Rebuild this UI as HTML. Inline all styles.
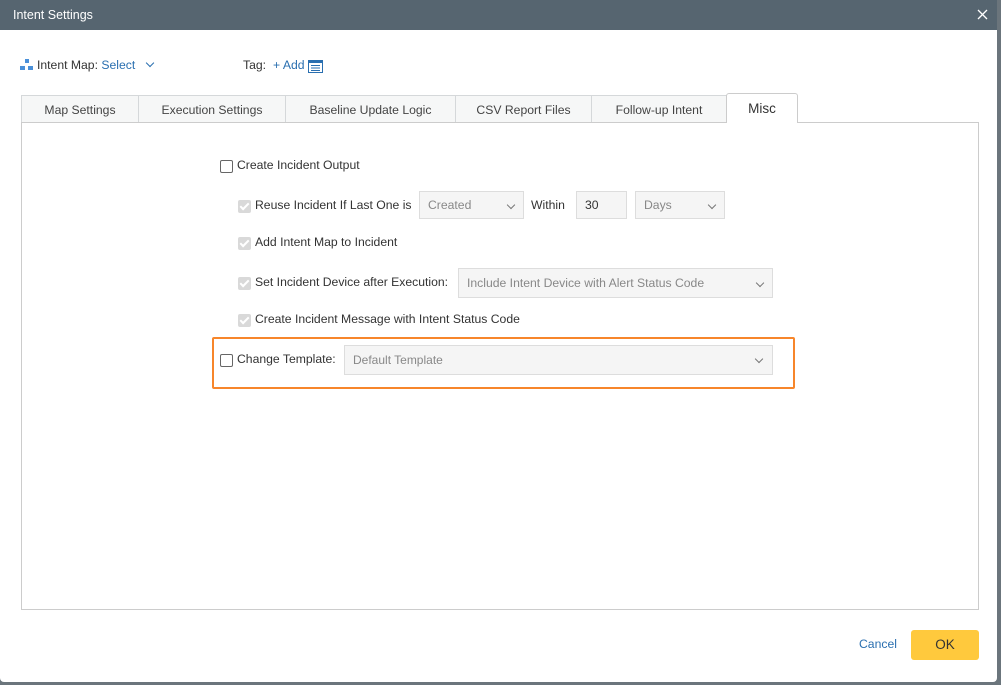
<!DOCTYPE html>
<html><head><meta charset="utf-8"><style>
body{margin:0;width:1001px;height:685px;background:#6b757c;position:relative;overflow:hidden;font-family:"Liberation Sans",sans-serif;font-size:12.2px;color:#333}
.a{position:absolute;white-space:nowrap}
#dlg{position:absolute;left:0;top:0;width:997px;height:682px;background:#fff;border-radius:0 0 4px 4px}
#hd{position:absolute;left:0;top:0;width:997px;height:30px;background:#566570;color:#fff}
.tab{position:absolute;top:95px;height:27px;background:#f6f7f7;border:1px solid #d5d8da;border-bottom:none;box-sizing:border-box;text-align:center;line-height:29px;color:#444}
.cb{position:absolute;width:11px;height:11px;border:1px solid #666;border-radius:2px;background:#fff}
.cd{position:absolute;width:13px;height:13px;border-radius:2px;background:#d9d9d9}
.cd:after{content:"";position:absolute;left:4px;top:1px;width:3px;height:7px;border:solid #fff;border-width:0 2px 2px 0;transform:rotate(45deg)}
.sel{position:absolute;height:28px;border:1px solid #ddd;background:#f5f5f5;box-sizing:border-box;color:#888;line-height:26px;padding-left:8px}
.chev{position:absolute;width:5px;height:5px;border:solid #777;border-width:0 1px 1px 0;transform:rotate(45deg)}
</style></head><body>
<div id="dlg">
<div id="hd"><span class="a" style="left:13px;top:8px;font-size:12.5px">Intent Settings</span>
<svg class="a" style="left:977px;top:9px" width="11" height="11"><path d="M1 1L10 10M10 1L1 10" stroke="#fff" stroke-width="1.3"/></svg></div>

<svg class="a" style="left:20px;top:59px" width="14" height="12"><rect x="5" y="0" width="4" height="4" fill="#4a90d9"/><rect x="0" y="7" width="5" height="4" fill="#4a90d9"/><rect x="8" y="7" width="5" height="4" fill="#4a90d9"/></svg>
<span class="a" style="left:37px;top:58px">Intent Map: <span style="color:#2a6fb0">Select</span></span>
<div class="chev" style="left:147px;top:60px;border-color:#2a6fb0"></div>
<span class="a" style="left:243px;top:58px">Tag:</span>
<span class="a" style="left:273px;top:58px;color:#2a6fb0">+ Add</span>
<svg class="a" style="left:308px;top:60px" width="15" height="13"><rect x="0.5" y="0.5" width="14" height="12" fill="#fff" stroke="#2a6fb0"/><rect x="0" y="0" width="15" height="3" fill="#2a6fb0"/><path d="M3 5.5H12M3 8H12M3 10.5H12" stroke="#2a6fb0"/></svg>

<div class="tab" style="left:21px;width:118px">Map Settings</div>
<div class="tab" style="left:138px;width:148px">Execution Settings</div>
<div class="tab" style="left:285px;width:171px">Baseline Update Logic</div>
<div class="tab" style="left:455px;width:137px">CSV Report Files</div>
<div class="tab" style="left:591px;width:136px">Follow-up Intent</div>
<div style="position:absolute;left:21px;top:122px;width:958px;height:488px;border:1px solid #ccc;box-sizing:border-box"></div>
<div class="tab" style="left:726px;top:93px;height:30px;width:72px;background:#fff;border-color:#ccc;border-radius:3px 3px 0 0;font-size:13.5px;line-height:30px;color:#333">Misc</div>

<div class="cb" style="left:220px;top:160px"></div><span class="a" style="left:237px;top:158px">Create Incident Output</span>
<div class="cd" style="left:238px;top:200px"></div><span class="a" style="left:255px;top:198px">Reuse Incident If Last One is</span>
<div class="sel" style="left:419px;top:191px;width:105px">Created</div><div class="chev" style="left:508px;top:202px"></div>
<span class="a" style="left:531px;top:198px">Within</span>
<div class="sel" style="left:576px;top:191px;width:51px;color:#333">30</div>
<div class="sel" style="left:635px;top:191px;width:90px">Days</div><div class="chev" style="left:709px;top:202px"></div>
<div class="cd" style="left:238px;top:237px"></div><span class="a" style="left:255px;top:235px">Add Intent Map to Incident</span>
<div class="cd" style="left:238px;top:277px"></div><span class="a" style="left:255px;top:275px">Set Incident Device after Execution:</span>
<div class="sel" style="left:458px;top:268px;width:315px;height:30px;line-height:28px">Include Intent Device with Alert Status Code</div><div class="chev" style="left:757px;top:280px"></div>
<div class="cd" style="left:238px;top:314px"></div><span class="a" style="left:255px;top:312px">Create Incident Message with Intent Status Code</span>
<div style="position:absolute;left:212px;top:337px;width:583px;height:52px;border:2px solid #f7862b;box-sizing:border-box;border-radius:2px"></div>
<div class="cb" style="left:220px;top:354px"></div><span class="a" style="left:237px;top:352px">Change Template:</span>
<div class="sel" style="left:344px;top:345px;width:429px;height:30px;line-height:28px;font-size:12px">Default Template</div><div class="chev" style="left:756px;top:356px"></div>

<span class="a" style="left:859px;top:637px;color:#2a6fb0">Cancel</span>
<div style="position:absolute;left:911px;top:630px;width:68px;height:30px;background:#ffc93d;border-radius:3px;text-align:center;line-height:30px;font-size:13.5px">OK</div>
</div>
</body></html>
